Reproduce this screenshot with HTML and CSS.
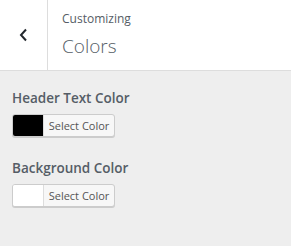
FILE: index.html
```html
<!DOCTYPE html>
<html lang="en">
<head>
    <meta charset="UTF-8">
    <title>Customizing - Colors</title>
    <link rel="stylesheet" href="styles.css">
</head>
<body>
    <div class="panel-header">
        <button class="back-btn" aria-label="Back">
            <svg width="12" height="14" viewBox="0 0 12 14"><polyline points="8,1.5 3,7 8,12.5" fill="none" stroke="#23282d" stroke-width="2"/></svg>
        </button>
        <div class="panel-title">
            <span class="panel-sub">Customizing</span>
            <span class="panel-name">Colors</span>
        </div>
    </div>
    <div class="controls">
        <div class="control">
            <div class="control-title">Header Text Color</div>
            <button class="color-btn">
                <span class="swatch swatch-black"></span>
                <span class="color-text">Select Color</span>
            </button>
        </div>
        <div class="control">
            <div class="control-title">Background Color</div>
            <button class="color-btn">
                <span class="swatch swatch-white"></span>
                <span class="color-text">Select Color</span>
            </button>
        </div>
    </div>
</body>
</html>
```

FILE: styles.css
```css
body {
    margin: 0;
    background: #eeeeee;
    font-family: "Open Sans", "Noto Sans", Arial, sans-serif;
    color: #555d66;
    width: 291px;
    height: 246px;
}
.panel-header {
    display: flex;
    height: 70px;
    background: #fff;
    border-bottom: 1px solid #dddddd;
}
.back-btn {
    width: 48px;
    height: 70px;
    padding: 0;
    margin: 0;
    border: 0;
    border-right: 1px solid #dddddd;
    background: #fff;
    display: flex;
    align-items: center;
    justify-content: center;
}
.panel-title {
    display: flex;
    flex-direction: column;
    padding: 9px 0 0 14px;
}
.panel-sub {
    font-size: 12px;
    line-height: 20px;
}
.panel-name {
    font-size: 19px;
    font-weight: 300;
    line-height: 34px;
}
.controls {
    padding: 15px 12px 0;
}
.control {
    margin-bottom: 19px;
}
.control-title {
    font-size: 13.5px;
    font-weight: 600;
    line-height: 24px;
    margin-bottom: 4px;
}
.color-btn {
    display: flex;
    align-items: stretch;
    height: 23px;
    width: 103px;
    padding: 0;
    margin: 0;
    border: 1px solid #cccccc;
    border-radius: 3px;
    box-shadow: 0 1px 0 #cccccc;
    background: #f7f7f7;
    overflow: hidden;
    font-family: inherit;
}
.swatch {
    width: 30px;
    border-right: 1px solid #dddddd;
}
.swatch-black {
    background: #000;
}
.swatch-white {
    background: #fff;
}
.color-text {
    flex: 1;
    font-size: 11px;
    line-height: 21px;
    color: #555555;
    text-align: center;
}
```
